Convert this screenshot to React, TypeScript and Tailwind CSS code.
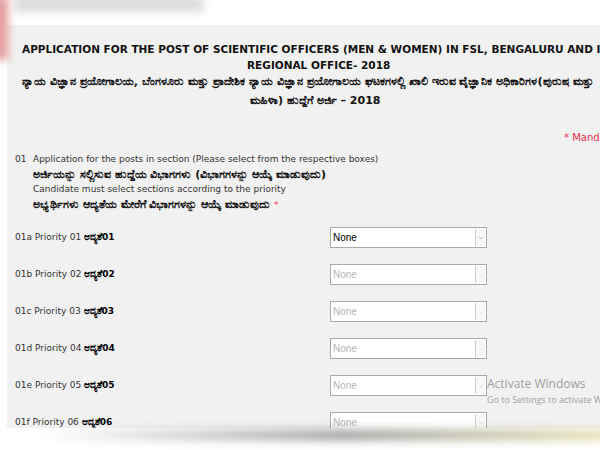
import { ChevronDown } from 'lucide-react';

const PRIORITIES = [
  { code: '01a', label: 'Priority 01', kn: 'ಆದ್ಯತೆ01' },
  { code: '01b', label: 'Priority 02', kn: 'ಆದ್ಯತೆ02' },
  { code: '01c', label: 'Priority 03', kn: 'ಆದ್ಯತೆ03' },
  { code: '01d', label: 'Priority 04', kn: 'ಆದ್ಯತೆ04' },
  { code: '01e', label: 'Priority 05', kn: 'ಆದ್ಯತೆ05' },
  { code: '01f', label: 'Priority 06', kn: 'ಆದ್ಯತೆ06' },
];

const sans = "font-['DejaVu_Sans',sans-serif]";

function SelectBox({ enabled }: { enabled: boolean }) {
  return (
    <div className="flex h-[21px] w-[157px] items-stretch border border-[#a9a9a9] bg-white">
      <div
        className={`flex flex-1 items-center pl-[2px] font-['Liberation_Sans',sans-serif] text-[10px] ${
          enabled ? 'text-black' : 'text-[#b4b4b4]'
        }`}
      >
        None
      </div>
      <div className="m-[1px] flex w-[10px] items-center justify-center border-l border-[#cfcfcf] bg-[#f7f7f7]">
        <ChevronDown className={`h-[8px] w-[8px] ${enabled ? 'text-[#888]' : 'text-[#cccccc]'}`} strokeWidth={1.5} />
      </div>
    </div>
  );
}

export default function App() {
  return (
    <div className="relative h-[450px] w-[600px] overflow-hidden bg-white">
      {/* blurred top strip */}
      <div className="flex h-[25px] items-start">
        <div className="ml-[14px] mt-[-4px] h-[16px] w-[190px] bg-[#dcdcdc] blur-[4px]" />
      </div>
      <div className="pointer-events-none absolute left-[-6px] top-[-4px] h-[64px] w-[14px] bg-[#e29a9a] blur-[4px]" />

      <div className={`ml-[7px] h-[403px] overflow-hidden bg-[#f1f1f1] ${sans}`}>
        <div className="pl-[15px] pt-[16px]">
          <div className="whitespace-nowrap text-[10.5px] font-bold leading-[16px] text-[#111]">
            APPLICATION FOR THE POST OF SCIENTIFIC OFFICERS (MEN &amp; WOMEN) IN FSL, BENGALURU AND ITS
          </div>
          <div className="whitespace-nowrap pl-[225px] text-[10.5px] font-bold leading-[16px] text-[#111]">
            REGIONAL OFFICE- 2018
          </div>
          <div className="whitespace-nowrap text-[11.3px] font-bold leading-[18px] text-[#111]">
            ನ್ಯಾಯ ವಿಜ್ಞಾನ ಪ್ರಯೋಗಾಲಯ, ಬೆಂಗಳೂರು ಮತ್ತು ಪ್ರಾದೇಶಿಕ ನ್ಯಾಯ ವಿಜ್ಞಾನ ಪ್ರಯೋಗಾಲಯ ಘಟಕಗಳಲ್ಲಿ ಖಾಲಿ ಇರುವ ವೈಜ್ಞಾನಿಕ ಅಧಿಕಾರಿಗಳ(ಪುರುಷ ಮತ್ತು
          </div>
          <div className="pl-[228px] text-[11px] font-bold leading-[20px] text-[#111]">ಮಹಿಳಾ) ಹುದ್ದೆಗೆ ಅರ್ಜಿ – 2018</div>
        </div>

        <div className="mt-[20px] flex justify-end text-[10px] leading-[14px] text-[#f0304a]">
          <span className="w-[36px] overflow-hidden whitespace-nowrap">* Mandatory</span>
        </div>

        <div className="mt-[7px] flex pl-[8px] text-[9px] text-[#333]">
          <div className="w-[18px] leading-[15px]">01</div>
          <div>
            <div className="leading-[15px]">Application for the posts in section (Please select from the respective boxes)</div>
            <div className="text-[11px] font-bold leading-[15px] text-[#111]">
              ಅರ್ಜಿಯನ್ನು ಸಲ್ಲಿಸುವ ಹುದ್ದೆಯ ವಿಭಾಗಗಳು (ವಿಭಾಗಗಳನ್ನು ಆಯ್ಕೆ ಮಾಡುವುದು)
            </div>
            <div className="leading-[15px]">Candidate must select sections according to the priority</div>
            <div className="text-[11px] font-bold leading-[15px] text-[#111]">
              ಅಭ್ಯರ್ಥಿಗಳು ಆದ್ಯತೆಯ ಮೇರೆಗೆ ವಿಭಾಗಗಳನ್ನು ಆಯ್ಕೆ ಮಾಡುವುದು{' '}
              <span className="text-[9px] font-normal text-[#f0304a]">*</span>
            </div>
          </div>
        </div>

        <div className="mt-[14px] flex flex-col gap-[16px] pl-[8px]">
          {PRIORITIES.map((p, i) => (
            <div key={p.code} className="flex h-[21px] items-center">
              <div className="w-[315px] text-[9px] text-[#333]">
                {p.code} {p.label} <span className="text-[9px] font-bold text-black">{p.kn}</span>
              </div>
              <SelectBox enabled={i === 0} />
            </div>
          ))}
        </div>
      </div>

      {/* bottom shadow */}
      <div className="mt-[2px] ml-[40px] h-[10px] w-[600px] bg-gradient-to-r from-transparent via-[#555] to-[#e8dc7a] opacity-60 blur-[5px]" />

      {/* watermark overlay */}
      <div className="pointer-events-none absolute left-[487px] top-[375px] font-['Open_Sans','DejaVu_Sans',sans-serif] text-[#a0a0a0]">
        <div className="whitespace-nowrap text-[12px] leading-[17px]">Activate Windows</div>
        <div className="whitespace-nowrap text-[9px] leading-[15px]">Go to Settings to activate Windows.</div>
      </div>
    </div>
  );
}
